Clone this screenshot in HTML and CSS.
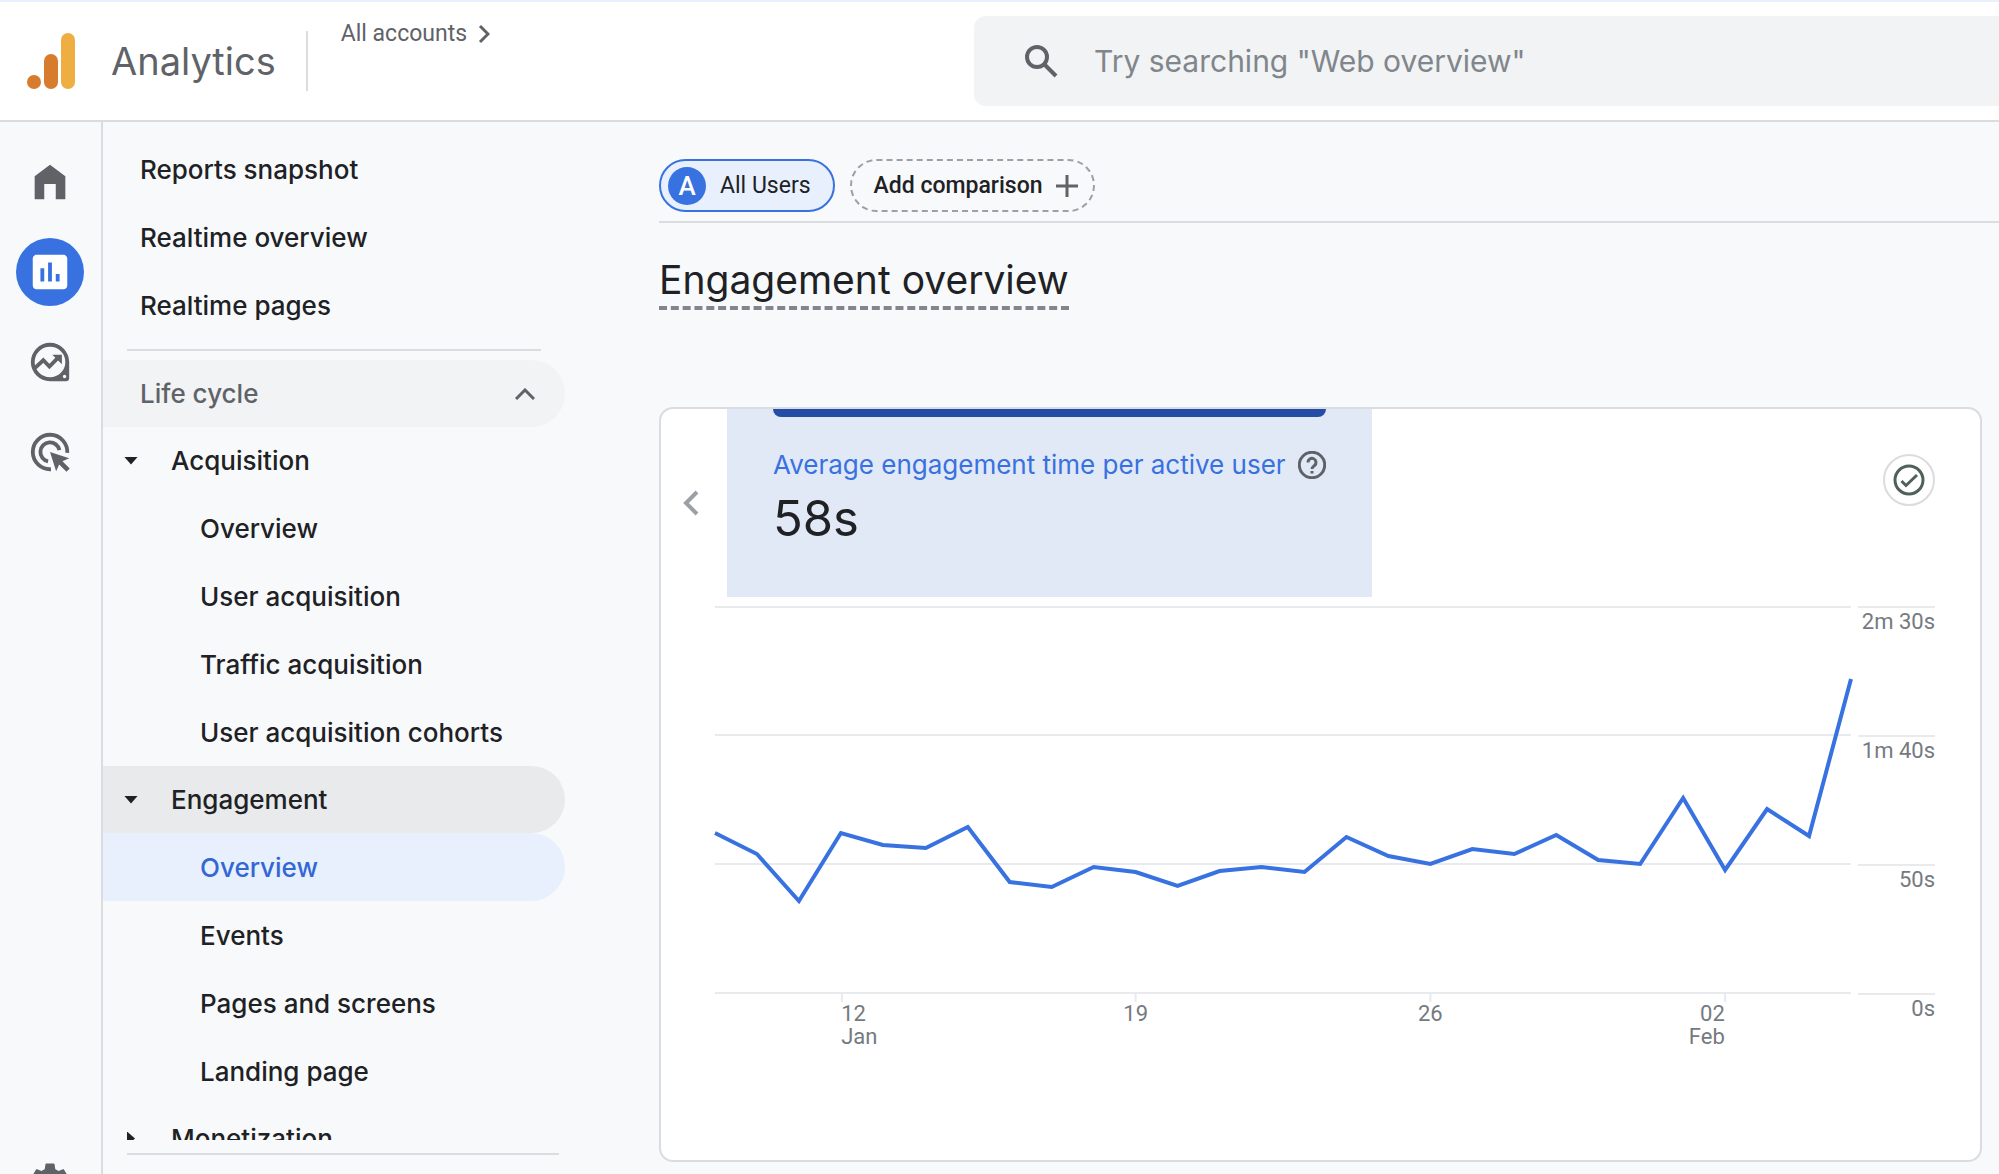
FILE: index.html
```html
<!DOCTYPE html>
<html lang="en">
  <head>
    <meta charset="UTF-8" />
    <meta name="viewport" content="width=device-width, initial-scale=1.0" />
    <title>Analytics | Engagement overview</title>
    <link rel="stylesheet" href="styles.css">
  </head>
  <body>
    <header class="topbar">
      <div class="brand">
        <svg class="logo" viewBox="0 0 48 56" aria-hidden="true">
          <circle cx="7" cy="49" r="7" fill="#d77b2d" />
          <rect x="17" y="21" width="14" height="35" rx="7" fill="#d77b2d" />
          <rect x="34" y="0" width="14" height="56" rx="7" fill="#efae42" />
        </svg>
        <span class="brand-name">Analytics</span>
        <a class="accounts" href="#">
          All accounts
          <svg class="accounts-arrow" viewBox="0 0 12 20" aria-hidden="true">
            <path d="M2 2l8 8-8 8" />
          </svg>
        </a>
      </div>
      <form class="search">
        <svg class="search-icon" viewBox="0 0 34 34" aria-hidden="true">
          <circle cx="13" cy="13" r="10" />
          <path d="M20 20l12 12" />
        </svg>
        <input class="search-input" type="text" aria-label="Search" placeholder='Try searching "Web overview"' />
      </form>
    </header>

    <div class="layout">
      <!-- Icon rail -->
      <nav class="rail" aria-label="Sections">
        <a class="rail-item" href="#" aria-label="Home">
          <svg class="rail-icon" viewBox="0 0 24 24"><path d="M4 21V9l8-6 8 6v12h-5v-8H9v8z" /></svg>
        </a>
        <a class="rail-item selected" href="#" aria-label="Reports">
          <svg class="rail-icon" viewBox="0 0 24 24"><path d="M19 3H5c-1.100 0-2 .9-2 2v14c0 1.100.9 2 2 2h14c1.100 0 2-.9 2-2V5c0-1.100-.9-2-2-2zM9 17H7v-7h2v7zm4 0h-2V7h2v10zm4 0h-2v-4h2v4z" /></svg>
        </a>
        <a class="rail-item" href="#" aria-label="Explore">
          <svg class="rail-icon" viewBox="0 0 24 24">
            <path fill-rule="evenodd" d="M12 2a10 10 0 1 0 0 20h8.300a1.700 1.700 0 0 0 1.700-1.700V12A10 10 0 0 0 12 2zm0 2a8 8 0 1 1 0 16 8 8 0 0 1 0-16zm7.600 14.700a.9.9 0 1 1 0 1.800.9.9 0 0 1 0-1.800z" />
            <path d="M3.500 15.700l5-4.600 3.200 3.300 4.300-4.400" fill="none" stroke="currentColor" stroke-width="2" />
            <path d="M13.200 8.200H18.200V13.200z" />
          </svg>
        </a>
        <a class="rail-item" href="#" aria-label="Advertising">
          <svg class="rail-icon" viewBox="0 0 24 24">
            <g fill="none" stroke="currentColor" stroke-width="2">
              <path d="M12.500 21A9 9 0 1 1 21 12.500" />
              <path d="M11 16.900A5 5 0 1 1 16.900 11" />
            </g>
            <path d="M12 12l10 3.200-3.500 1.600 3.800 3.800-1.700 1.700-3.800-3.800-1.600 3.500z" />
          </svg>
        </a>
        <a class="rail-item rail-admin" href="#" aria-label="Admin">
          <svg class="rail-icon" viewBox="0 0 24 24"><path fill-rule="evenodd" d="M19.140 12.940c.04-.3.060-.61.060-.94s-.02-.64-.07-.94l2.030-1.580c.18-.14.230-.41.120-.61l-1.920-3.320c-.12-.22-.37-.29-.59-.22l-2.390.96c-.5-.38-1.030-.7-1.620-.94L14.400 2.810c-.04-.24-.24-.41-.48-.41h-3.840c-.24 0-.43.170-.47.41l-.36 2.540c-.59.240-1.130.570-1.620.94l-2.390-.96c-.22-.08-.47 0-.59.220L2.740 8.870c-.12.210-.08.470.120.610l2.030 1.580c-.05.300-.09.630-.09.940s.02.640.07.940l-2.030 1.580c-.18.140-.23.410-.12.610l1.920 3.320c.12.220.37.290.59.220l2.390-.96c.5.380 1.030.700 1.620.940l.36 2.540c.05.240.24.410.48.410h3.840c.24 0 .44-.17.470-.41l.36-2.540c.59-.24 1.130-.56 1.620-.94l2.390.96c.22.080.47 0 .59-.22l1.920-3.320c.12-.22.070-.47-.12-.61l-2.010-1.580zM12 15.600a3.600 3.600 0 1 1 0-7.200 3.600 3.600 0 0 1 0 7.200z" /></svg>
        </a>
      </nav>

      <!-- Report navigation -->
      <nav class="reports" aria-label="Reports">
        <div class="reports-scroll">
          <div class="nav-top">
            <a class="nav-item" href="#">Reports snapshot</a>
            <a class="nav-item" href="#">Realtime overview</a>
            <a class="nav-item" href="#">Realtime pages</a>
          </div>
          <button class="nav-head nav-section" type="button" aria-expanded="true">
            Life cycle
            <svg class="chevron-up" viewBox="0 0 20 12" aria-hidden="true"><path d="M1 11l9-9 9 9" /></svg>
          </button>
          <button class="nav-head nav-group" type="button" aria-expanded="true"><span class="caret"></span>Acquisition</button>
          <a class="nav-item nav-child" href="#">Overview</a>
          <a class="nav-item nav-child" href="#">User acquisition</a>
          <a class="nav-item nav-child" href="#">Traffic acquisition</a>
          <a class="nav-item nav-child" href="#">User acquisition cohorts</a>
          <button class="nav-head nav-group open" type="button" aria-expanded="true"><span class="caret"></span>Engagement</button>
          <a class="nav-item nav-child active" href="#">Overview</a>
          <a class="nav-item nav-child" href="#">Events</a>
          <a class="nav-item nav-child" href="#">Pages and screens</a>
          <a class="nav-item nav-child" href="#">Landing page</a>
          <button class="nav-head nav-group" type="button" aria-expanded="false"><span class="caret caret-closed"></span>Monetization</button>
        </div>
      </nav>

      <main class="content">
        <div class="comparisons">
          <button class="chip chip-users" type="button"><span class="chip-badge">A</span>All Users</button>
          <button class="chip chip-add" type="button">
            Add comparison
            <svg class="plus" viewBox="0 0 22 22" aria-hidden="true"><path d="M11 0v22M0 11h22" /></svg>
          </button>
        </div>

        <h1 class="title">Engagement overview</h1>

        <section class="card">
          <div class="metrics">
            <button class="previous" type="button" aria-label="Previous metric">
              <svg class="previous-icon" viewBox="0 0 16 26"><path d="M14 2L3 13l11 11" /></svg>
            </button>
            <div class="metric">
              <div class="metric-label">
                Average engagement time per active user
                <svg class="help" viewBox="0 0 28 28" aria-hidden="true">
                  <circle cx="14" cy="14" r="12.700" />
                  <path d="M10 11.500a4 4 0 1 1 6.500 3c-1.500 1.200-2.500 1.800-2.500 3.500M14 20v2.500" />
                </svg>
              </div>
              <div class="metric-value">58s</div>
            </div>
            <button class="status" type="button" aria-label="Data quality">
              <svg class="status-icon" viewBox="0 0 32 32">
                <circle cx="16" cy="16" r="14" />
                <path d="M8.500 17l4.500 4.500L24 11" />
              </svg>
            </button>
          </div>

          <div class="chart">
            <div class="plot">
              <svg class="plot-lines" viewBox="0 0 1137 396" preserveAspectRatio="none" role="img" aria-label="Average engagement time per active user by day">
                <path class="grid" d="M0 1H1137M0 129H1137M0 258H1137M0 387H1137M127 387V396M421 387V396M716 387V396M1011 387V396" />
                <polyline class="series" points="0,227 42,248 84,295 126,227 168,239 211,242 253,221 295,276 337,281 379,261 421,266 463,280 505,265 547,261 590,266 632,231 674,250 716,258 758,243 800,248 842,229 884,254 926,258 969,192 1011,264 1053,203 1095,230 1137,73" />
              </svg>
              <div class="dates">
                <span class="date">12<br />Jan</span>
                <span class="date date-19">19</span>
                <span class="date date-26">26</span>
                <span class="date date-end">02<br />Feb</span>
              </div>
            </div>
            <div class="scale">
              <span class="mark">2m 30s</span>
              <span class="mark">1m 40s</span>
              <span class="mark">50s</span>
              <span class="mark">0s</span>
            </div>
          </div>
        </section>
      </main>
    </div>
  </body>
</html>
```
FILE: styles.css
```css
* {
  box-sizing: border-box;
}

body {
  margin: 0;
  height: 100vh;
  display: flex;
  flex-direction: column;
  overflow: hidden;
  background-color: #f8f9fb;
  color: #202124;
  font-family: Inter, "Liberation Sans", sans-serif;
  font-size: 26px;
}

a {
  color: inherit;
  text-decoration: none;
}

button {
  padding: 0;
  border: 0;
  background: none;
  color: inherit;
  font: inherit;
  text-align: left;
  cursor: pointer;
}

svg {
  display: block;
  flex: none;
  fill: none;
}

/* Header */
.topbar {
  flex: none;
  display: flex;
  height: 122px;
  border-top: 2px solid #e8f0fe;
  border-bottom: 2px solid #dadce0;
  background-color: #fff;
}

.brand {
  flex: 0 0 974px;
  display: flex;
  align-items: center;
  padding-left: 27px;
  color: #5f6368;
}

.logo {
  width: 48px;
  height: 56px;
}

.brand-name {
  padding: 0 30px 0 36px;
  border-right: 2px solid #dadce0;
  font-size: 38px;
  line-height: 60px;
}

.accounts {
  align-self: flex-start;
  display: flex;
  align-items: center;
  gap: 11px;
  padding: 18px 0 0 33px;
  font-family: Roboto, sans-serif;
  font-size: 23px;
  line-height: 28px;
}

.accounts-arrow {
  width: 12px;
  height: 20px;
  stroke: #5f6368;
  stroke-width: 3;
}

.search {
  flex: 1;
  display: flex;
  align-items: center;
  gap: 36px;
  margin: 14px 0;
  padding-left: 50px;
  border-radius: 12px 0 0 12px;
  background-color: #f1f3f4;
}

.search-icon {
  width: 34px;
  height: 34px;
  stroke: #5f6368;
  stroke-width: 4;
}

.search-input {
  flex: 1;
  min-width: 0;
  padding: 0;
  border: 0;
  outline: 0;
  background: none;
  font: inherit;
  font-size: 30px;
}

.search-input::placeholder {
  color: #80868b;
}

.layout {
  flex: 1;
  min-height: 0;
  display: flex;
}

/* Icon rail */
.rail {
  flex: 0 0 103px;
  display: flex;
  flex-direction: column;
  gap: 22px;
  padding: 26px 0 0 16px;
  border-right: 2px solid #dadce0;
  color: #5f6368;
}

.rail-item {
  flex: none;
  display: flex;
  align-items: center;
  justify-content: center;
  width: 68px;
  height: 68px;
  border-radius: 50%;
}

.rail-item.selected {
  background-color: #3871e0;
  color: #fff;
}

.rail-icon {
  width: 46px;
  height: 46px;
  fill: currentColor;
}

.rail-admin {
  margin: auto 0 -42px;
}

/* Report navigation */
.reports {
  flex: 0 0 462px;
  display: flex;
  flex-direction: column;
  padding-bottom: 19px;
  font-weight: 500;
}

.reports::after {
  content: "";
  margin: 13px 6px 0 24px;
  border-bottom: 2px solid #dadce0;
}

.reports-scroll {
  flex: 1;
  min-height: 0;
  display: flex;
  flex-direction: column;
  overflow: hidden;
}

.nav-top {
  flex: none;
  display: flex;
  flex-direction: column;
  padding-top: 13px;
  margin-bottom: 9px;
}

.nav-top::after {
  content: "";
  margin: 10px 24px 0;
  border-bottom: 2px solid #dadce0;
}

.nav-item,
.nav-head {
  flex: none;
  display: flex;
  align-items: center;
  height: 68px;
  padding-left: 37px;
  border-radius: 0 34px 34px 0;
}

.nav-head {
  height: 67px;
}

.nav-section {
  justify-content: space-between;
  padding-right: 30px;
  background-color: #f1f3f4;
  color: #5f6368;
}

.chevron-up {
  width: 20px;
  height: 12px;
  stroke: #5f6368;
  stroke-width: 3;
}

.nav-group {
  gap: 33px;
  padding-left: 21px;
}

.nav-group.open {
  background-color: #e8eaeb;
}

.caret {
  width: 14px;
  height: 8px;
  background-color: #202124;
  clip-path: polygon(0 0, 100% 0, 50% 100%);
}

.caret-closed {
  width: 8px;
  height: 14px;
  margin: 0 3px;
  clip-path: polygon(0 0, 100% 50%, 0 100%);
}

.nav-child {
  padding-left: 97px;
}

.nav-child.active {
  background-color: #e8f0fe;
  color: #3367d6;
}

/* Report */
.content {
  flex: 1;
  min-width: 0;
  display: flex;
  flex-direction: column;
  align-items: flex-start;
  padding: 37px 0 12px 94px;
}

.comparisons {
  align-self: stretch;
  display: flex;
  gap: 15px;
  padding-bottom: 9px;
  border-bottom: 2px solid #dadce0;
}

.chip {
  display: flex;
  align-items: center;
  height: 53px;
  border-radius: 27px;
  font-family: Roboto, sans-serif;
  font-size: 23px;
}

.chip-users {
  gap: 14px;
  padding: 0 22px 0 7px;
  border: 2px solid #3871e0;
  background-color: #e8f0fe;
}

.chip-badge {
  width: 38px;
  height: 38px;
  border-radius: 50%;
  background-color: #3871e0;
  color: #fff;
  font-size: 26px;
  font-weight: 500;
  line-height: 38px;
  text-align: center;
}

.chip-add {
  gap: 13px;
  padding: 0 15px 0 22px;
  border: 2px dashed #9aa0a6;
  font-weight: 500;
}

.plus {
  width: 22px;
  height: 22px;
  stroke: #5f6368;
  stroke-width: 3;
}

.title {
  margin: 31px 0 97px;
  border-bottom: 4px dashed #80868b;
  font-size: 39px;
  font-weight: 400;
  line-height: 52px;
}

.card {
  flex: 1;
  align-self: stretch;
  margin-right: 17px;
  border: 2px solid #dadce0;
  border-radius: 14px;
  background-color: #fff;
}

.metrics {
  display: flex;
  align-items: flex-start;
  padding-right: 45px;
}

.previous {
  align-self: center;
  width: 66px;
  padding-left: 22px;
}

.previous-icon {
  width: 16px;
  height: 26px;
  stroke: #9aa0a6;
  stroke-width: 4;
}

.metric {
  height: 188px;
  padding: 0 46px;
  background-color: #e1e8f6;
}

.metric::before {
  content: "";
  display: block;
  height: 8px;
  border-radius: 0 0 8px 8px;
  background-color: #254da5;
}

.metric-label {
  display: flex;
  align-items: center;
  gap: 12px;
  margin-top: 32px;
  color: #3871e0;
  line-height: 32px;
}

.help {
  width: 28px;
  height: 28px;
  stroke: #5f6368;
  stroke-width: 3;
}

.metric-value {
  font-size: 49px;
  line-height: 76px;
}

.status {
  display: flex;
  align-items: center;
  justify-content: center;
  width: 52px;
  height: 52px;
  margin: 45px 0 0 auto;
  border: 2px solid #dadce0;
  border-radius: 50%;
}

.status-icon {
  width: 32px;
  height: 32px;
  stroke: #4f6158;
  stroke-width: 3;
}

/* Line chart */
.chart {
  display: flex;
  gap: 7px;
  padding: 9px 45px 0 54px;
  color: #757a7f;
  font-family: Roboto, sans-serif;
  font-size: 22px;
}

.plot {
  flex: 1;
  min-width: 0;
}

.plot-lines {
  width: 100%;
  height: 396px;
  overflow: visible;
}

.grid {
  stroke: #e8eaed;
  stroke-width: 2;
}

.series {
  stroke: #3871e0;
  stroke-width: 4;
  vector-effect: non-scaling-stroke;
}

/* One fraction per day, labels sit on the weekly ticks */
.dates {
  display: grid;
  grid-template-columns: 3fr 7fr 7fr 7fr 3fr;
  line-height: 23px;
}

.date {
  grid-row: 1;
  grid-column: 2;
}

.date-19 {
  grid-column: 2 / 4;
  justify-self: center;
}

.date-26 {
  grid-column: 3 / 5;
  justify-self: center;
}

.date-end {
  grid-column: 4;
  text-align: right;
}

.scale {
  flex: 0 0 77px;
}

.mark {
  display: block;
  height: 129px;
  border-top: 2px solid #e8eaed;
  line-height: 27px;
  text-align: right;
  white-space: nowrap;
}

.mark:last-child {
  height: 29px;
}
```
